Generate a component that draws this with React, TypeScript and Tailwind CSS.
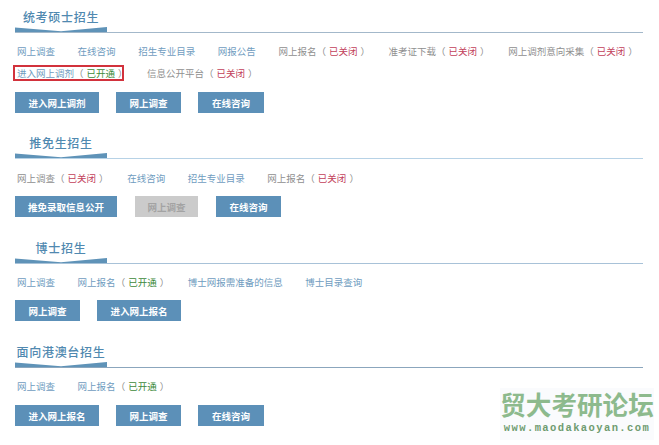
const FONT = "font-['Noto_Sans_CJK_SC','Liberation_Sans',sans-serif]";

type Item = { label: string; blue?: boolean; status?: "open" | "closed" };

function LinkItem({ label, blue, status }: Item) {
  return (
    <span className={`flex items-center whitespace-nowrap ${blue ? "text-[#6f9cc0]" : "text-[#8f8f8f]"}`}>
      <span>{label}</span>
      {status && (
        <>
          <span className="w-[9.5px] text-[#8f8f8f]">（</span>
          <span className={`ml-[3px] ${status === "open" ? "text-[#3d8a3a]" : "text-[#c2405a]"}`}>
            {status === "open" ? "已开通" : "已关闭"}
          </span>
          <span className="ml-[3px] mr-[-4px] w-[9.5px] text-[#8f8f8f]">）</span>
        </>
      )}
    </span>
  );
}

function Ribbon() {
  return (
    <svg width="92" height="5" viewBox="0 0 92 5" className="block">
      <path d="M0 0.5 L46 4.2 L92 0 L92 5 L0 5 Z" fill="#5f93b8" />
    </svg>
  );
}

function Header({ title, line }: { title: string; line: string }) {
  return (
    <div className={`h-[33px] border-b ${line}`}>
      <div className="w-[92px] flex flex-col items-center">
        <div className="mt-[8px] h-[19px] whitespace-nowrap text-[12px] leading-[18px] font-medium tracking-[0.7px] text-[#5089b0]">
          {title}
        </div>
        <Ribbon />
      </div>
    </div>
  );
}

function Btn({ label, w, off }: { label: string; w: string; off?: boolean }) {
  return (
    <div
      className={`h-[21px] ${w} flex items-center justify-center text-[9.5px] font-bold ${
        off ? "bg-[#cbcbcb] text-[#a3a3a3]" : "bg-[#5c90b8] text-white"
      }`}
    >
      {label}
    </div>
  );
}

export default function App() {
  return (
    <div className={`relative h-[445px] w-[659px] overflow-hidden bg-white pl-[15px] pr-[16px] text-[9.5px] leading-[16px] ${FONT}`}>
      <section>
        <Header title="统考硕士招生" line="border-[#a3b8ca]" />
        <div className="mt-[10px] ml-[2px] flex h-[16px] gap-[22.6px]">
          <LinkItem label="网上调查" blue />
          <LinkItem label="在线咨询" blue />
          <LinkItem label="招生专业目录" blue />
          <LinkItem label="网报公告" blue />
          <LinkItem label="网上报名" status="closed" />
          <LinkItem label="准考证下载" status="closed" />
          <LinkItem label="网上调剂意向采集" status="closed" />
        </div>
        <div className="mt-[6px] ml-[-2px] flex h-[16px] gap-[23px]">
          <div className="flex h-[16px] w-[111px] items-center border-2 border-[#d2323c] pl-[2px]">
            <LinkItem label="进入网上调剂" blue status="open" />
          </div>
          <LinkItem label="信息公开平台" status="closed" />
        </div>
        <div className="mt-[11px] flex gap-[17px]">
          <Btn label="进入网上调剂" w="w-[84px]" />
          <Btn label="网上调查" w="w-[65px]" />
          <Btn label="在线咨询" w="w-[66px]" />
        </div>
      </section>

      <section className="mt-[13px]">
        <Header title="推免生招生" line="border-[#b7d2e6]" />
        <div className="mt-[11px] ml-[2px] flex h-[16px] gap-[22.6px]">
          <LinkItem label="网上调查" status="closed" />
          <LinkItem label="在线咨询" blue />
          <LinkItem label="招生专业目录" blue />
          <LinkItem label="网上报名" status="closed" />
        </div>
        <div className="mt-[10px] flex gap-[18px]">
          <Btn label="推免录取信息公开" w="w-[102px]" />
          <Btn label="网上调查" w="w-[63px]" off />
          <Btn label="在线咨询" w="w-[65px]" />
        </div>
      </section>

      <section className="mt-[14px]">
        <Header title="博士招生" line="border-[#a8c2d8]" />
        <div className="mt-[10px] ml-[2px] flex h-[16px] gap-[22.6px]">
          <LinkItem label="网上调查" blue />
          <LinkItem label="网上报名" blue status="open" />
          <LinkItem label="博士网报需准备的信息" blue />
          <LinkItem label="博士目录查询" blue />
        </div>
        <div className="mt-[10px] flex gap-[17px]">
          <Btn label="网上调查" w="w-[65px]" />
          <Btn label="进入网上报名" w="w-[84px]" />
        </div>
      </section>

      <section className="mt-[14px]">
        <Header title="面向港澳台招生" line="border-[#8ba6bd]" />
        <div className="mt-[10px] ml-[2px] flex h-[16px] gap-[22.6px]">
          <LinkItem label="网上调查" blue />
          <LinkItem label="网上报名" blue status="open" />
        </div>
        <div className="mt-[11px] flex gap-[17px]">
          <Btn label="进入网上报名" w="w-[84px]" />
          <Btn label="网上调查" w="w-[65px]" />
          <Btn label="在线咨询" w="w-[66px]" />
        </div>
      </section>

      <div className="absolute left-[500px] top-[388px] flex h-[52px] w-[154px] flex-col items-center bg-[#fafbfd]">
        <div className="h-[32px] whitespace-nowrap text-[25.6px] leading-[32px] font-bold text-[#8dba8d]">贸大考研论坛</div>
        <div className="mt-[1px] whitespace-nowrap font-['Liberation_Mono',monospace] text-[10.5px] leading-[14px] font-bold tracking-[1.4px] text-[#6f9c70]">
          www.maodakaoyan.com
        </div>
      </div>
    </div>
  );
}
